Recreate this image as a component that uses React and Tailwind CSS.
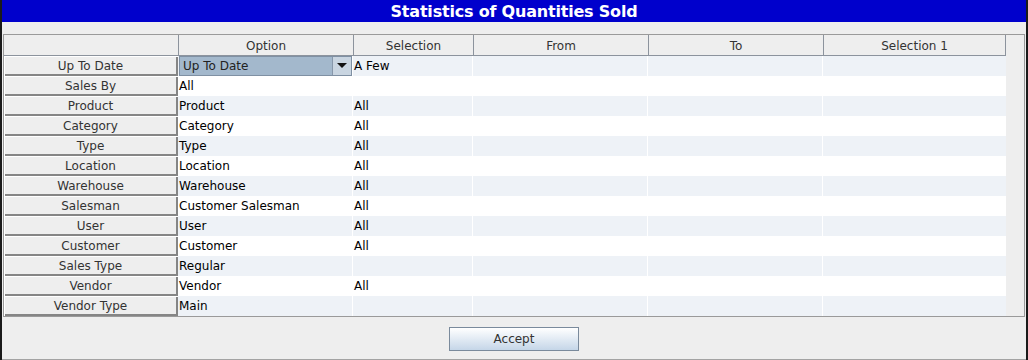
const rows = [
  { label: "Up To Date", option: "Up To Date", sel: "A Few", combo: true },
  { label: "Sales By", option: "All", sel: "" },
  { label: "Product", option: "Product", sel: "All" },
  { label: "Category", option: "Category", sel: "All" },
  { label: "Type", option: "Type", sel: "All" },
  { label: "Location", option: "Location", sel: "All" },
  { label: "Warehouse", option: "Warehouse", sel: "All" },
  { label: "Salesman", option: "Customer Salesman", sel: "All" },
  { label: "User", option: "User", sel: "All" },
  { label: "Customer", option: "Customer", sel: "All" },
  { label: "Sales Type", option: "Regular", sel: "" },
  { label: "Vendor", option: "Vendor", sel: "All" },
  { label: "Vendor Type", option: "Main", sel: "" },
];

const headers = [
  { name: "Option", w: "w-[175px]" },
  { name: "Selection", w: "w-[120px]" },
  { name: "From", w: "w-[175px]" },
  { name: "To", w: "w-[175px]" },
  { name: "Selection 1", w: "w-[182px]" },
];

function Combo({ value }) {
  return (
    <div className="flex h-full w-full border border-[#7f90a3] bg-[#a3b8cc]">
      <div className="flex flex-1 items-center pl-[3px] text-[#222]">{value}</div>
      <div className="flex w-[19px] items-center justify-center border-l border-[#8797aa] bg-[#c9d5e1]">
        <svg width="10" height="6" viewBox="0 0 10 6">
          <path d="M0 0 L10 0 L5 5 Z" fill="#111" />
        </svg>
      </div>
    </div>
  );
}

export default function App() {
  return (
    <div
      className="flex h-[360px] w-[1028px] flex-col bg-[#1a1a1a] px-[2px] text-[12px]"
      style={{ fontFamily: '"DejaVu Sans", sans-serif' }}
    >
      <div className="flex h-[22px] items-center justify-center bg-[#0000cc] pt-[1px] text-[16px] font-bold tracking-[-0.2px] text-white">
        Statistics of Quantities Sold
      </div>

      <div className="flex flex-1 flex-col bg-[#eeeeee] pt-[12px]">
        <div className="ml-[1px] flex w-[1022px] border border-[#9a9a9a] bg-[#eeeeee]">
          <div className="flex flex-col">
            {/* header */}
            <div className="flex h-[21px]">
              <div className="w-[174px] border-b border-[#8c939d]" />
              {headers.map((h) => (
                <div
                  key={h.name}
                  className={`${h.w} flex items-center justify-center border-b border-l border-[#8c939d] pt-[2px] text-[#333]`}
                >
                  {h.name}
                </div>
              ))}
              <div className="w-px border-b border-[#8c939d] bg-[#8c939d]" />
            </div>

            {rows.map((r, i) => (
              <div
                key={r.label}
                className={`flex h-[20px] ${i % 2 === 0 ? "bg-[#eef2f7]" : "bg-white"}`}
              >
                <div className="w-[174px] bg-white pl-[1px] pt-[1px]">
                  <div className="flex h-full items-center justify-center border-r-2 border-b-2 border-[#858585] bg-[#eeeeee] text-[#333]">
                    {r.label}
                  </div>
                </div>
                <div className="flex w-[175px] items-center border-r border-white pl-[1px] text-black">
                  {r.combo ? <Combo value={r.option} /> : r.option}
                </div>
                <div className="flex w-[120px] items-center border-r border-white pl-[1px] text-black">
                  {r.sel}
                </div>
                <div className="w-[175px] border-r border-white" />
                <div className="w-[175px] border-r border-white" />
                <div className="w-[182px]" />
              </div>
            ))}
          </div>
          <div className="flex-1 bg-[#eeeeee]" />
        </div>

        <div className="flex flex-1 items-start justify-center border-b border-[#a3a3a3] pt-[10px]">
          <button className="h-[24px] w-[130px] border border-[#7a8a9c] bg-gradient-to-b from-white to-[#c5d6e8] text-[12px] text-[#333]">
            Accept
          </button>
        </div>
      </div>
    </div>
  );
}
